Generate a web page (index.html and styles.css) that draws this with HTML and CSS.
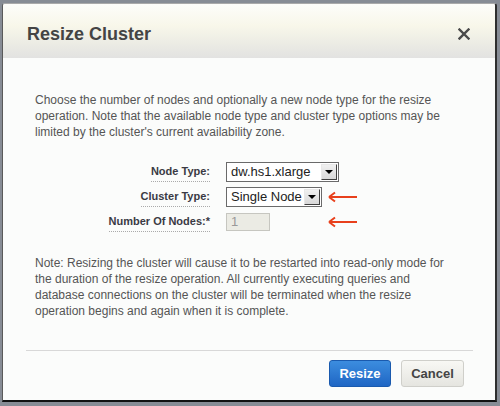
FILE: index.html
```html
<!DOCTYPE html>
<html>
<head>
<meta charset="utf-8">
<link rel="stylesheet" href="styles.css">
</head>
<body>
<div class="dialog">
  <div class="header">
    <h1 class="title">Resize Cluster</h1>
    <svg class="close" width="12" height="12" viewBox="0 0 12 12"><path d="M1.5 1.5 L10.5 10.5 M10.5 1.5 L1.5 10.5" stroke="#4a4a4a" stroke-width="2.4" stroke-linecap="square"/></svg>
  </div>
  <div class="body">
    <p class="text intro">Choose the number of nodes and optionally a new node type for the resize operation. Note that the available node type and cluster type options may be limited by the cluster's current availability zone.</p>
    <div class="form">
      <div class="label"><span>Node Type:</span></div>
      <div class="control">
        <div class="select wide"><span class="val">dw.hs1.xlarge</span><span class="btn"><i></i></span></div>
      </div>
      <div class="label"><span>Cluster Type:</span></div>
      <div class="control">
        <div class="select narrow"><span class="val">Single Node</span><span class="btn"><i></i></span></div>
        <svg class="arrow" width="30" height="12" viewBox="0 0 30 12"><path d="M2 6 H30 M2 6 L8 1.5 M2 6 L8 10.5" stroke="#e8401c" stroke-width="2" fill="none"/></svg>
      </div>
      <div class="label"><span>Number Of Nodes:*</span></div>
      <div class="control">
        <div class="input">1</div>
        <svg class="arrow" width="30" height="12" viewBox="0 0 30 12"><path d="M2 6 H30 M2 6 L8 1.5 M2 6 L8 10.5" stroke="#e8401c" stroke-width="2" fill="none"/></svg>
      </div>
    </div>
    <p class="text note">Note: Resizing the cluster will cause it to be restarted into read-only mode for the duration of the resize operation. All currently executing queries and database connections on the cluster will be terminated when the resize operation begins and again when it is complete.</p>
    <div class="footer">
      <button class="button primary">Resize</button>
      <button class="button secondary">Cancel</button>
    </div>
  </div>
</div>
</body>
</html>
```
FILE: styles.css
```css
html, body {
  margin: 0;
  padding: 0;
}
body {
  width: 500px;
  height: 406px;
  overflow: hidden;
  background: #878c95;
  font-family: "Liberation Sans", Arial, sans-serif;
}
.dialog {
  box-sizing: border-box;
  margin: 3px 0 0 2px;
  width: 495px;
  height: 399px;
  border: 1px solid #5a5a5a;
  border-top-color: #aaa;
  border-right: 2px solid #2e2e2e;
  border-bottom: 2px solid #111;
  border-radius: 3px 3px 0 0;
  background: #fbfcfb;
  display: flex;
  flex-direction: column;
}
.header {
  box-sizing: border-box;
  height: 54px;
  padding: 19px 25px 0 24px;
  display: flex;
  justify-content: space-between;
  align-items: flex-start;
  background: linear-gradient(#fdfdfa 0%, #f8f7ea 40%, #ebebe4 75%, #e2e2e1 100%);
  border-radius: 2px 2px 0 0;
}
.title {
  margin: 0;
  font-size: 18px;
  line-height: 22px;
  font-weight: bold;
  color: #444;
}
.close {
  margin-top: 5px;
}
.body {
  padding: 34px 22px 0 23px;
}
.text {
  margin: 0;
  padding: 0 13px 0 9px;
  font-size: 12px;
  line-height: 16px;
  color: #555;
}
.form {
  margin-top: 19px;
  display: grid;
  grid-template-columns: 184px 131px;
  grid-auto-rows: 25px;
  column-gap: 16px;
}
.label {
  justify-self: end;
  align-self: start;
  margin-top: 2px;
}
.label span {
  display: inline-block;
  font-size: 11px;
  line-height: 14px;
  font-weight: bold;
  color: #3a3a44;
  padding-bottom: 3px;
  border-bottom: 1px dotted #aaa;
}
.control {
  display: flex;
  align-items: center;
}
.select {
  box-sizing: border-box;
  height: 20px;
  border: 1px solid #6a6a6a;
  background: #fff;
  display: flex;
  align-items: center;
  justify-content: space-between;
  padding-left: 4px;
  font-size: 13px;
  color: #222;
}
.select.wide { width: 113px; }
.select.narrow { width: 96px; height: 20px; }
.btn {
  box-sizing: border-box;
  width: 16px;
  height: 16px;
  margin-right: 1px;
  background: linear-gradient(#f0f0f0, #d8d8d8);
  border: 1px solid #e8e8e8;
  border-right-color: #404040;
  border-bottom-color: #404040;
  display: flex;
  align-items: center;
  justify-content: center;
}
.btn i {
  width: 0;
  height: 0;
  border-left: 4px solid transparent;
  border-right: 4px solid transparent;
  border-top: 4px solid #000;
}
.input {
  box-sizing: border-box;
  width: 44px;
  height: 18px;
  border: 1px solid #c6c6c0;
  background: #ebebe4;
  color: #999;
  font-size: 13px;
  line-height: 16px;
  padding-left: 4px;
}
.arrow {
  margin-left: auto;
}
.note {
  margin-top: 21px;
}
.footer {
  margin-top: 31px;
  border-top: 1px solid #d8d8d8;
  padding: 9px 9px 0 0;
  display: flex;
  justify-content: flex-end;
  gap: 10px;
}
.button {
  box-sizing: border-box;
  height: 27px;
  border-radius: 3px;
  font-family: "Liberation Sans", Arial, sans-serif;
  font-size: 13px;
  font-weight: bold;
  padding: 0;
  cursor: pointer;
}
.primary {
  width: 62px;
  color: #fff;
  background: linear-gradient(#3c8ddf, #1f66c4);
  border: 1px solid #1a5aae;
}
.secondary {
  width: 63px;
  color: #444;
  background: linear-gradient(#f8f8f4, #e5e5e0);
  border: 1px solid #cfcfca;
}
```
